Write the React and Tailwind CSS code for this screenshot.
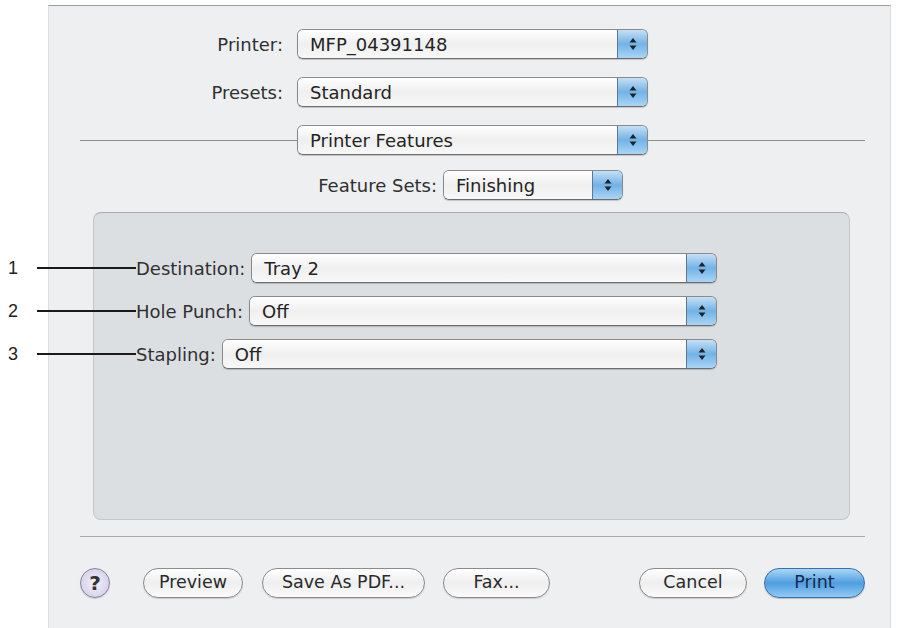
const Arrows = () => (
  <svg width="8" height="14" viewBox="0 0 8 14" className="block">
    <path d="M4 1 L7.5 5.5 L0.5 5.5 Z" fill="#1d232b" />
    <path d="M4 13 L7.5 8.5 L0.5 8.5 Z" fill="#1d232b" />
  </svg>
);

function PopUp({ value, className = "" }) {
  return (
    <div
      className={`flex h-[30px] items-stretch rounded-[6px] border border-[#8a8a8a] border-b-[#6c6c6c] shadow-[0_1px_1px_rgba(0,0,0,0.18)] ${className}`}
    >
      <div className="flex flex-1 items-center rounded-l-[5px] bg-linear-to-b from-[#ffffff] via-[#efefef] to-[#f8f8f8] pl-[12px] pt-px text-[18px] leading-none text-[#242424]">
        {value}
      </div>
      <div className="flex w-[30px] items-center justify-center rounded-r-[5px] border-l border-[#5d7896] bg-linear-to-b from-[#c4e0f7] via-[#72b2e6] to-[#a9d5f6]">
        <Arrows />
      </div>
    </div>
  );
}

function Button({ children, className = "" }) {
  return (
    <button
      className={`flex h-[30px] items-center justify-center rounded-full border border-[#8c8c8c] bg-linear-to-b from-[#ffffff] via-[#eeeeee] to-[#fbfbfb] text-[17.5px] leading-none text-[#2a2a2a] shadow-[0_1px_1px_rgba(0,0,0,0.15)] ${className}`}
    >
      {children}
    </button>
  );
}

function Callout({ n }) {
  return (
    <div className="absolute right-full top-1/2 flex -translate-y-1/2 items-center">
      <span className="w-[29px] font-['Liberation_Sans',sans-serif] text-[18px] leading-none text-[#222]">{n}</span>
      <span className="h-[2px] w-[99px] bg-[#1a1a1a]" />
    </div>
  );
}

const features = [
  { n: "1", label: "Destination:", value: "Tray 2" },
  { n: "2", label: "Hole Punch:", value: "Off" },
  { n: "3", label: "Stapling:", value: "Off" },
];

export default function App() {
  return (
    <div className="min-h-screen bg-white font-['DejaVu_Sans',sans-serif] text-[#2b2b2b]">
      <div className="ml-[48px] mt-[5px] h-[623px] w-[843px] border-x border-t border-x-[#dcdee0] border-t-[#9c9c9c] bg-[#edeff0] pl-[31px] pr-[25px] pt-[23px]">
        {/* printer + presets */}
        <div className="flex h-[30px] items-center">
          <span className="w-[203px] text-right text-[18px] text-[#303030]">Printer:</span>
          <PopUp value="MFP_04391148" className="ml-[14px] w-[351px]" />
        </div>
        <div className="mt-[18px] flex h-[30px] items-center">
          <span className="w-[203px] text-right text-[18px] text-[#303030]">Presets:</span>
          <PopUp value="Standard" className="ml-[14px] w-[351px]" />
        </div>

        {/* pane selector */}
        <div className="mt-[18px] flex h-[30px] items-center">
          <span className="h-px flex-1 bg-[#8f8f8f]" />
          <PopUp value="Printer Features" className="w-[351px]" />
          <span className="h-px flex-1 bg-[#8f8f8f]" />
        </div>

        <div className="mt-[15px] flex h-[30px] items-center">
          <span className="w-[357px] text-right text-[18px] text-[#303030]">Feature Sets:</span>
          <PopUp value="Finishing" className="ml-[6px] w-[180px]" />
        </div>

        {/* finishing options */}
        <div className="ml-[13px] mr-[15px] mt-[12px] h-[308px] rounded-[8px] border border-[#c4c7ca] border-t-[#a9abad] bg-[#dcdfe2] pl-[42px] pr-[132px] pt-[40px]">
          <div className="flex flex-col gap-[13px]">
            {features.map((f) => (
              <div key={f.n} className="relative flex h-[30px] items-center gap-[6px]">
                <Callout n={f.n} />
                <span className="text-[18px] text-[#303030]">{f.label}</span>
                <PopUp value={f.value} className="flex-1" />
              </div>
            ))}
          </div>
        </div>

        <div className="mt-[16px] h-px bg-[#a7a9ab]" />

        {/* bottom buttons */}
        <div className="mt-[31px] flex h-[30px] items-center">
          <div className="flex h-[30px] w-[30px] items-center justify-center rounded-full border border-[#85839a] bg-radial from-[#f4f2fb] to-[#cdc5e6] text-[20px] font-bold leading-none text-[#333] shadow-[0_1px_1px_rgba(0,0,0,0.15)]">
            ?
          </div>
          <Button className="ml-[33px] w-[100px]">Preview</Button>
          <Button className="ml-[19px] w-[163px]">Save As PDF...</Button>
          <Button className="ml-[18px] w-[107px]">Fax...</Button>
          <Button className="ml-[89px] w-[108px]">Cancel</Button>
          <button className="ml-[17px] flex h-[30px] w-[101px] items-center justify-center rounded-full border border-[#3d6fa6] bg-linear-to-b from-[#a9d6f6] via-[#4e9ee0] to-[#8fcaf4] text-[17.5px] leading-none text-[#16294a] shadow-[0_1px_1px_rgba(0,0,0,0.2)]">
            Print
          </button>
        </div>
      </div>
    </div>
  );
}
